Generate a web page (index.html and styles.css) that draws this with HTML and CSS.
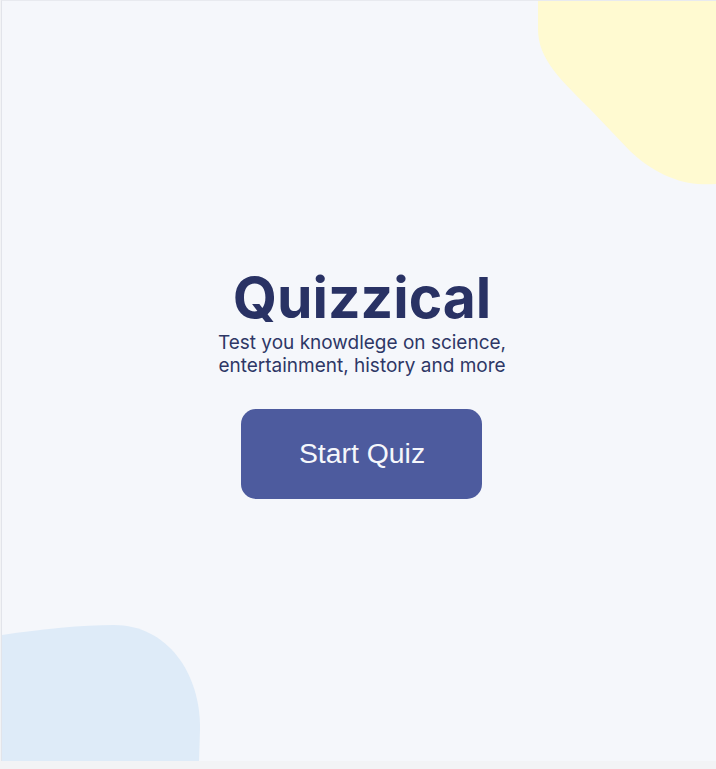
FILE: index.html
```html
<!DOCTYPE html>
<html lang="en">
<head>
<meta charset="utf-8">
<title>Quizzical</title>
<link rel="stylesheet" href="styles.css">
</head>
<body>
<main class="app">
  <svg class="blob blob-yellow" width="178" height="184" viewBox="0 0 178 184" aria-hidden="true">
    <path d="M0,0 L178,0 L178,183 C150,185 122,178 92,150 L52,108 C22,78 0,58 0,28 Z" fill="#fffad1"/>
  </svg>
  <svg class="blob blob-blue" width="200" height="136" viewBox="0 0 200 136" aria-hidden="true">
    <path d="M0,10 C40,4 80,0 112,0 C165,0 199,48 198,105 L197,136 L0,136 Z" fill="#deebf8"/>
  </svg>
  <section class="intro">
    <h1 class="title">Quizzical</h1>
    <p class="subtitle">Test you knowdlege on science,<br>entertainment, history and more</p>
    <button class="start-btn" type="button">Start Quiz</button>
  </section>
</main>
</body>
</html>
```
FILE: styles.css
```css
html, body {
  margin: 0;
  padding: 0;
}
body {
  background: #f2f3f5;
  height: 769px;
  overflow: hidden;
}
.app {
  position: relative;
  box-sizing: border-box;
  height: 761px;
  margin-left: 1px;
  border-left: 1px solid #e2e4ea;
  border-top: 1px solid #e8eaef;
  background: #f5f7fb;
  overflow: hidden;
  display: flex;
  align-items: center;
  justify-content: center;
}
.blob {
  position: absolute;
  display: block;
}
.blob-yellow {
  top: 0;
  right: 0;
}
.blob-blue {
  left: 0;
  bottom: 0;
}
.intro {
  position: relative;
  display: flex;
  flex-direction: column;
  align-items: center;
  text-align: center;
  color: #293264;
  margin-top: 1px;
  margin-left: 4px;
}
.title {
  margin: 0 0 0 2px;
  font-family: Inter, "Noto Sans", sans-serif;
  font-weight: 700;
  font-size: 57px;
  line-height: 66px;
}
.subtitle {
  margin: 0 0 0 2px;
  font-family: Inter, "Noto Sans", sans-serif;
  font-size: 19px;
  line-height: 23px;
  color: #2e3766;
}
.start-btn {
  margin-top: 32px;
  width: 241px;
  height: 90px;
  border: none;
  border-radius: 15px;
  background: #4d5b9e;
  color: #f5f7fb;
  font-family: "Liberation Sans", Arial, sans-serif;
  font-size: 28.4px;
  padding-left: 8px;
  cursor: pointer;
}
```
